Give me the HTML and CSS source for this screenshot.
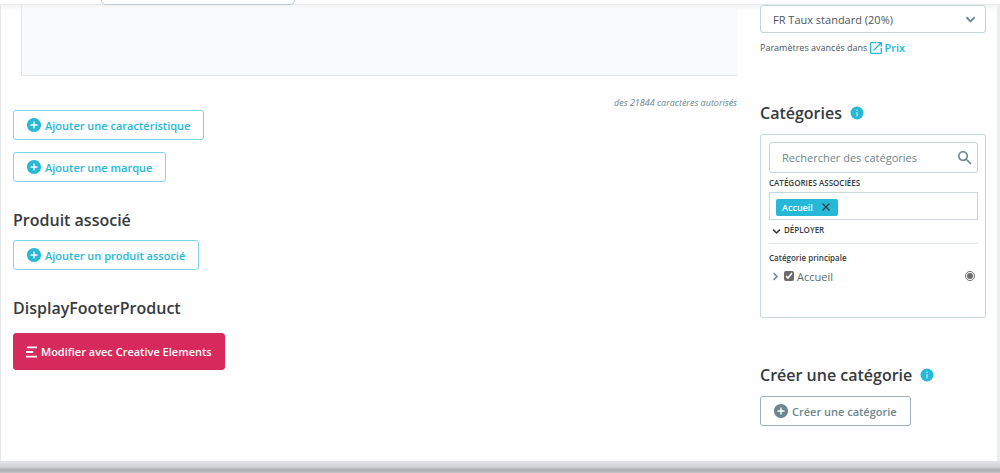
FILE: index.html
```html
<!DOCTYPE html>
<html lang="fr">
<head>
    <meta charset="UTF-8">
    <meta name="viewport" content="width=device-width, initial-scale=1.0">
    <title>Produit</title>
    <link rel="stylesheet" href="styles.css">
</head>
<body>
    <svg class="sprite" aria-hidden="true">
        <symbol id="icon-plus" viewBox="2 2 20 20">
            <path fill="currentColor" d="M12 2C6.480 2 2 6.480 2 12s4.480 10 10 10 10-4.480 10-10S17.520 2 12 2zm5 11h-4v4h-2v-4H7v-2h4V7h2v4h4v2z"/>
        </symbol>
        <symbol id="icon-info" viewBox="0 0 14 14">
            <circle cx="7" cy="7" r="6.500" fill="#25b9d7"/>
            <path fill="#a8e3ef" d="M6.300 3.500h1.400v1.400H6.300zM6.300 6h1.400v4.500H6.300z"/>
        </symbol>
        <symbol id="icon-chevron" viewBox="0 0 12 12">
            <path fill="none" stroke="currentColor" stroke-width="2" d="M1.500 3.500L6 8l4.500-4.500"/>
        </symbol>
    </svg>

    <header class="topbar">
        <div class="topbar-search"></div>
    </header>

    <main class="page">
        <div class="content">
            <textarea class="editor" aria-label="Description"></textarea>
            <p class="counter">des 21844 caractères autorisés</p>

            <div class="actions">
                <button class="btn btn-outline" type="button">
                    <svg class="icon"><use href="#icon-plus"/></svg>
                    Ajouter une caractéristique
                </button>
                <button class="btn btn-outline" type="button">
                    <svg class="icon"><use href="#icon-plus"/></svg>
                    Ajouter une marque
                </button>
            </div>

            <section class="block">
                <h2 class="title">Produit associé</h2>
                <button class="btn btn-outline" type="button">
                    <svg class="icon"><use href="#icon-plus"/></svg>
                    Ajouter un produit associé
                </button>
            </section>

            <section class="block block-footer">
                <h2 class="title">DisplayFooterProduct</h2>
                <button class="btn btn-creative" type="button">
                    <svg class="icon-bars" viewBox="0 0 12 12">
                        <path fill="currentColor" d="M1 0h11v2H1zM0 5h8v2H0zM0 10h12v2H0z"/>
                    </svg>
                    Modifier avec Creative Elements
                </button>
            </section>
        </div>

        <aside class="sidebar">
            <div class="select-wrap">
                <select class="select" aria-label="Taxe">
                    <option>FR Taux standard (20%)</option>
                </select>
                <svg class="select-arrow"><use href="#icon-chevron"/></svg>
            </div>
            <p class="advanced">
                Paramètres avancés dans
                <a class="link" href="#">
                    <svg class="icon-open" viewBox="3 3 18 18">
                        <path fill="currentColor" d="M19 19H5V5h7V3H5a2 2 0 0 0-2 2v14a2 2 0 0 0 2 2h14c1.100 0 2-.9 2-2v-7h-2v7zM14 3v2h3.590l-9.830 9.830 1.410 1.410L19 6.410V10h2V3h-7z"/>
                    </svg>
                    Prix
                </a>
            </p>

            <h2 class="title title-categories">
                Catégories
                <svg class="icon"><use href="#icon-info"/></svg>
            </h2>
            <div class="card">
                <div class="search">
                    <input class="search-input" type="text" placeholder="Rechercher des catégories" aria-label="Rechercher des catégories">
                    <svg class="search-icon" viewBox="3 3 18 18">
                        <path fill="currentColor" d="M15.500 14h-.79l-.28-.27A6.470 6.470 0 0 0 16 9.500 6.500 6.500 0 1 0 9.500 16c1.610 0 3.090-.59 4.230-1.570l.27.28v.79l5 4.990L20.490 19l-4.990-5zm-6 0C7.010 14 5 11.990 5 9.500S7.010 5 9.500 5 14 7.010 14 9.500 11.990 14 9.500 14z"/>
                    </svg>
                </div>
                <p class="label">CATÉGORIES ASSOCIÉES</p>
                <div class="tags">
                    <span class="tag">
                        Accueil
                        <button class="tag-close" type="button" aria-label="Retirer Accueil">
                            <svg viewBox="0 0 8 8"><path fill="none" stroke="currentColor" stroke-width="1.100" d="M.5.5l7 7M7.500.5l-7 7"/></svg>
                        </button>
                    </span>
                </div>
                <button class="expand" type="button">
                    <svg class="chevron"><use href="#icon-chevron"/></svg>
                    DÉPLOYER
                </button>
                <p class="label label-main">Catégorie principale</p>
                <div class="tree-item">
                    <svg class="chevron chevron-right"><use href="#icon-chevron"/></svg>
                    <label class="tree-label">
                        <input class="check" type="checkbox" checked>
                        Accueil
                    </label>
                    <input class="radio" type="radio" name="main-category" aria-label="Catégorie principale Accueil" checked>
                </div>
            </div>

            <h2 class="title title-create">
                Créer une catégorie
                <svg class="icon"><use href="#icon-info"/></svg>
            </h2>
            <button class="btn btn-secondary" type="button">
                <svg class="icon"><use href="#icon-plus"/></svg>
                Créer une catégorie
            </button>
        </aside>
    </main>

    <footer class="bottombar"></footer>
</body>
</html>
```
FILE: styles.css
```css
* {
    margin: 0;
    padding: 0;
    box-sizing: border-box;
}

body {
    min-height: 100vh;
    display: flex;
    flex-direction: column;
    background: #fefefe;
    color: #363a41;
    font-family: 'Open Sans', sans-serif;
    font-size: 12px;
}

button,
input,
select,
textarea {
    font: inherit;
    color: inherit;
}

button {
    cursor: pointer;
}

svg {
    flex-shrink: 0;
}

.sprite {
    display: none;
}

.topbar {
    height: 5px;
    padding-left: 101px;
    background: white;
    border-bottom: 1px solid #e6e8ea;
}

.topbar-search {
    width: 194px;
    height: 5px;
    background: white;
    border: 1px solid #bbcdd2;
    border-top: none;
    border-radius: 0 0 10px 10px;
}

.page {
    flex: 1;
    display: grid;
    grid-template-columns: minmax(0, 1fr) 226px;
    gap: 23px;
    padding: 0 11px 0 12px;
    border-left: 1px solid #e4e6e8;
    border-right: 3px solid #eceded;
    background: linear-gradient(#f4f4f4, #fefefe 6px);
}

.content {
    display: flex;
    flex-direction: column;
}

.editor {
    display: block;
    height: 71px;
    margin-left: 8px;
    border: 1px solid #e2e6e8;
    border-top: none;
    border-right: none;
    background: linear-gradient(#f4f4f4, #fbfbfb 5px, #f9fafc 5px);
    resize: none;
    outline: none;
}

.counter {
    margin-top: 20px;
    line-height: 14px;
    font-size: 9px;
    font-style: italic;
    color: #6c868e;
    text-align: right;
}

.actions {
    display: flex;
    flex-direction: column;
    align-items: flex-start;
    gap: 12px;
}

.btn {
    display: inline-flex;
    align-items: center;
    gap: 4px;
    height: 30px;
    padding: 0 13px;
    border: 1px solid;
    border-radius: 3px;
    background: white;
    font-size: 11px;
    font-weight: 600;
    white-space: nowrap;
}

.btn-outline {
    border-color: #7fd6e6;
    color: #25b9d7;
}

.btn-secondary {
    border-color: #9db0b6;
    color: #6c868e;
}

.btn-creative {
    height: 37px;
    padding: 0 12px;
    border-color: #d72a5c;
    background: #d72a5c;
    color: white;
}

.icon {
    width: 14px;
    height: 14px;
}

.icon-bars {
    width: 11px;
    height: 12px;
}

.title {
    display: flex;
    align-items: center;
    gap: 8px;
    line-height: 22px;
    font-size: 16px;
    font-weight: 600;
}

.block {
    display: flex;
    flex-direction: column;
    align-items: flex-start;
    gap: 9px;
    margin-top: 27px;
}

.block-footer {
    gap: 14px;
}

.sidebar {
    display: flex;
    flex-direction: column;
    align-items: stretch;
}

.select-wrap {
    display: grid;
    align-items: center;
}

.select {
    grid-area: 1 / 1;
    width: 100%;
    height: 28px;
    padding: 0 12px;
    appearance: none;
    background: white;
    border: 1px solid #c4d4d8;
    border-radius: 3px;
    color: #4d565b;
    font-size: 11px;
}

.select-arrow {
    grid-area: 1 / 1;
    justify-self: end;
    width: 11px;
    height: 11px;
    margin-right: 10px;
    color: #6c868e;
    pointer-events: none;
}

.advanced {
    display: flex;
    align-items: center;
    gap: 3px;
    margin-top: 7px;
    line-height: 16px;
    color: #4d565b;
    font-size: 9px;
}

.link {
    display: inline-flex;
    align-items: center;
    gap: 2px;
    color: #25b9d7;
    font-size: 11px;
    font-weight: 600;
    text-decoration: none;
}

.icon-open {
    width: 12px;
    height: 12px;
}

.title-categories {
    margin-top: 46px;
}

.card {
    min-height: 184px;
    margin-top: 10px;
    padding: 7px 7px 7px 8px;
    background: white;
    border: 1px solid #c8dadb;
    border-radius: 2px;
}

.search {
    display: flex;
    align-items: center;
    height: 31px;
    padding: 0 5px 0 12px;
    border: 1px solid #c4d4d8;
    border-radius: 3px;
}

.search-input {
    flex: 1;
    min-width: 0;
    border: none;
    outline: none;
    background: none;
    font-size: 11px;
}

.search-input::placeholder {
    color: #6c868e;
}

.search-icon {
    width: 14px;
    height: 14px;
    color: #6c868e;
}

.label {
    margin-top: 3px;
    line-height: 13px;
    font-size: 8px;
    font-weight: 600;
}

.tags {
    display: flex;
    align-items: center;
    height: 28px;
    margin-top: 3px;
    padding: 2px 6px 0;
    border: 1px solid #c8d7da;
}

.tag {
    display: inline-flex;
    align-items: center;
    gap: 9px;
    height: 17px;
    padding: 0 8px 0 6px;
    background: #25b9d7;
    border-radius: 2px;
    color: white;
    font-size: 9px;
    font-weight: 600;
}

.tag-close {
    display: flex;
    border: none;
    background: none;
    color: #363a41;
}

.tag-close svg {
    width: 8px;
    height: 8px;
}

.expand {
    display: flex;
    align-items: center;
    gap: 3px;
    width: 100%;
    height: 24px;
    padding: 0 3px 4px;
    border: none;
    border-bottom: 1px solid #dfe7ea;
    background: none;
    font-size: 8px;
    font-weight: 600;
}

.expand .chevron {
    margin-top: 4px;
}

.chevron {
    width: 9px;
    height: 9px;
    color: #363a41;
}

.chevron-right {
    color: #6c868e;
    transform: rotate(-90deg);
}

.label-main {
    margin-top: 7px;
}

.tree-item {
    display: flex;
    align-items: center;
    gap: 4px;
    height: 24px;
    padding: 0 3px 0 2px;
    color: #576c72;
    font-size: 11px;
}

.tree-label {
    flex: 1;
    display: flex;
    align-items: center;
    gap: 3px;
}

.check,
.radio {
    width: 10px;
    height: 10px;
    accent-color: #6b6b6b;
}

.title-create {
    margin-top: 46px;
}

.title-create + .btn {
    align-self: flex-start;
    margin-top: 10px;
}

.bottombar {
    height: 12px;
    background: linear-gradient(#e3e5e8, #d0d2d4 6px, #a9acaf 9px, #c4c6c8);
}
```
